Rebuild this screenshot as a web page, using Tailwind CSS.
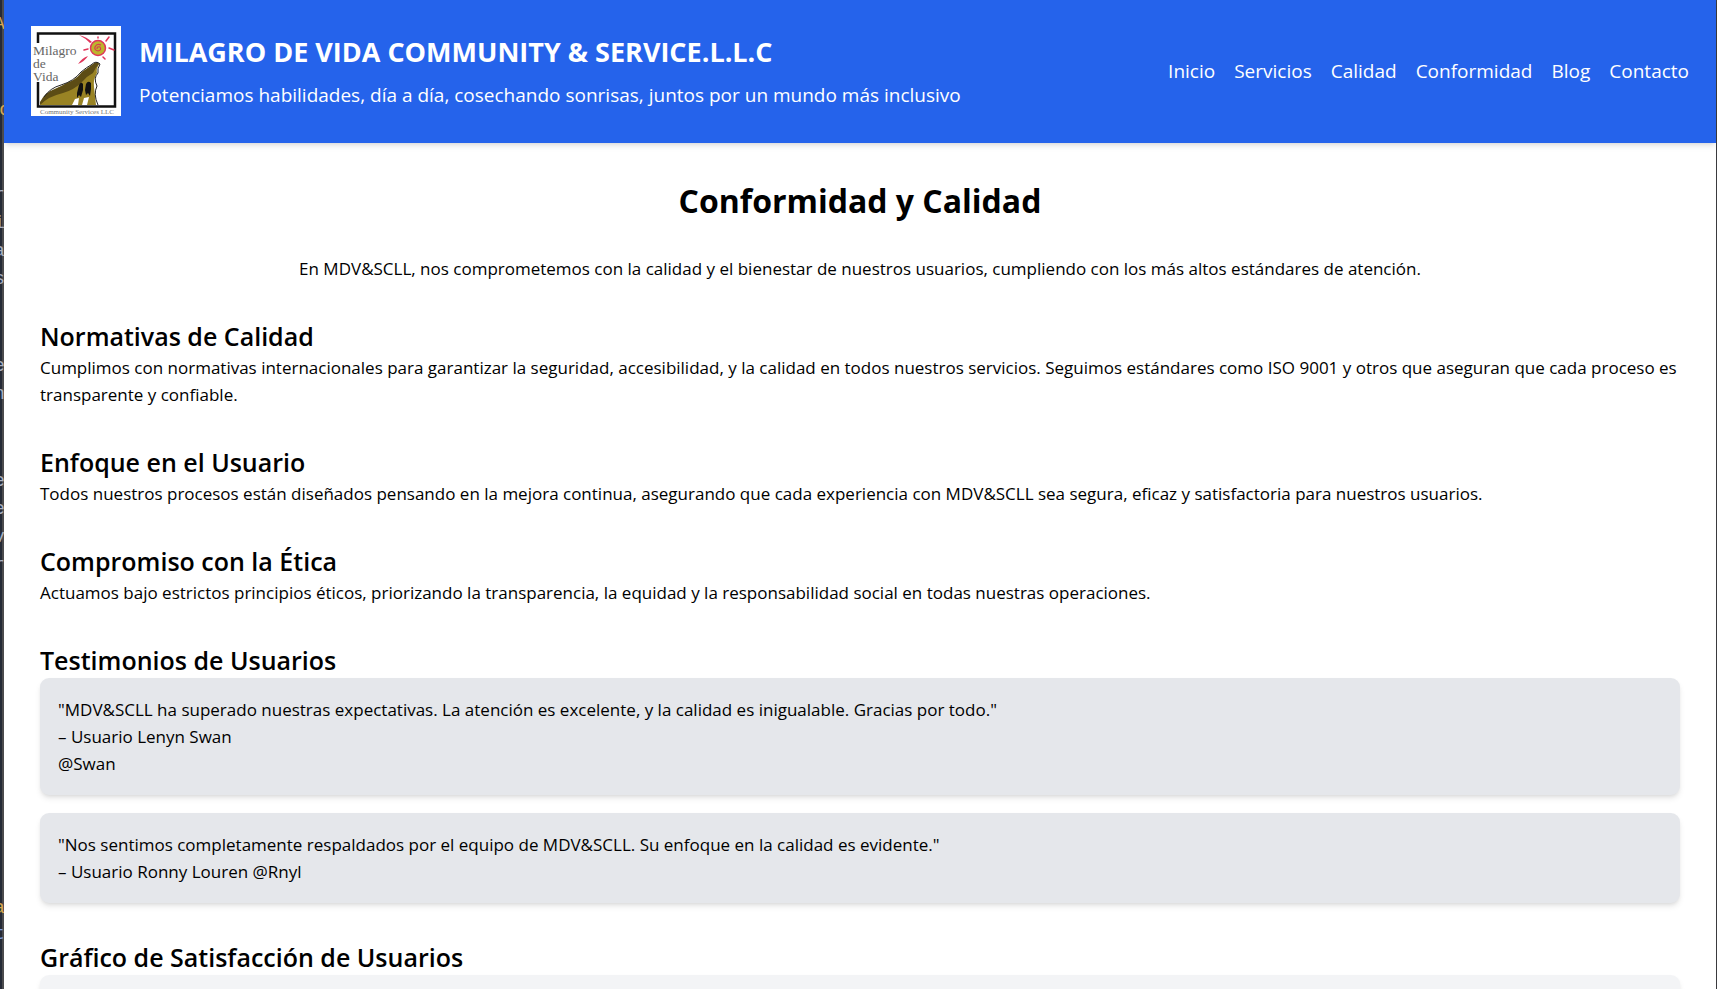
<!DOCTYPE html>
<html lang="es">
<head>
<meta charset="utf-8">
<title>Conformidad y Calidad</title>
<script src="https://cdn.jsdelivr.net/npm/@tailwindcss/browser@4"></script>
</head>
<body class="flex h-screen overflow-hidden bg-white font-['Open_Sans','Noto_Sans',sans-serif] text-[17px] leading-[27px] text-black">
  <!-- Sliver of the code editor behind the page -->
  <aside aria-hidden="true" class="relative w-1 shrink-0 overflow-hidden bg-linear-to-r from-[#252a36] from-50% to-[#4b4b4d] to-50% font-['Liberation_Mono',monospace] text-[18px] leading-[28px] text-[#a9b0c0]">
    <div class="absolute -left-[6px] top-[10px] text-[#d9a94f]">A</div>
    <div class="absolute right-[-6px] top-[96px] text-[#d9a94f]">o</div>
    <div class="absolute -left-[6px] top-[181px]">r<br>i<br>a<br>s</div>
    <div class="absolute -left-[6px] top-[352px]">e<br>n</div>
    <div class="absolute -left-[6px] top-[467px]">e<br>e<br>v<br>r</div>
    <div class="absolute -left-[6px] top-[894px] text-[#d9a94f]">a</div>
    <div class="absolute -left-[6px] top-[920px] text-[#7f9fe0]">t</div>
  </aside>
  <div class="min-w-0 flex-1 border-r border-[#3a3a3e]">
    <header class="flex items-center justify-between bg-[#2563eb] px-[27px] pt-[26px] pb-[27px] text-white shadow-md">
      <div class="flex items-center gap-[18px]">
        <svg class="size-[90px] shrink-0" viewBox="0 0 90 90" role="img" aria-label="Milagro de Vida">
          <rect width="90" height="90" fill="#fff"/>
          <path d="M7 17V7.500H84V80.500H7V56" fill="none" stroke="#111" stroke-width="2.500"/>
          <g fill="#666" font-family="Liberation Serif, serif" font-size="13.500">
            <text x="2" y="29">Milagro</text><text x="2" y="42">de</text><text x="2" y="55">Vida</text>
            <text x="9" y="88" font-size="7" fill="#777">Community Services LLC</text>
          </g>
          <path d="M48 9Q56 11 61 16L59 17Q54 12 48 9ZM47 38Q51 32 57 30Q54 35 47 38Z" fill="#e0355a"/>
          <path d="M75 15L78 11M78 22L83 24M53 24L57 23M72 31L74 33M67 11V12" stroke="#e0355a" stroke-width="1.500" stroke-linecap="round"/>
          <circle cx="67" cy="22" r="7.500" fill="#bdb52c" stroke="#e0355a" stroke-width="1.500"/>
          <path d="M66 23q0-3 3-2q2 3-2 4q-4-1-3-4q2-4 6-2" fill="none" stroke="#d8394f" stroke-width="1.200"/>
          <path d="M9 79Q13 68 24 63Q31 60 36 57Q45 54 51 46Q57 42 61 39Q66 34 68 38Q65 43 66 47Q62 53 63 61L65 79Z" fill="#998324"/>
          <path d="M9 76Q14 66 24 63Q31 60 36 57Q45 54 51 46Q57 42 61 39Q66 34 68 38Q64 42 62 47Q56 50 51 56Q43 64 32 67Q18 70 9 79Z" fill="#5c4c15"/>
          <path d="M13 71Q19 62 30 59Q43 55 50 46Q56 41 60 39Q65 34 69 38Q66 43 67 47Q62 52 66 60Q62 68 67 79" fill="none" stroke="#222" stroke-width="1"/>
          <path d="M41 79L44 73L48 72L47 79ZM51 79L53 72L58 71L56 79Z" fill="#fff"/>
          <path d="M48 59q2-4 4-1l0 6-2 7-2-2-2 3 0-5zM55 58q2-4 5-1l0 6-1 7-2-3-2 2-1-5z" fill="#111"/>
        </svg>
        <div class="pt-0.5">
          <div class="text-[27px] leading-[36px] font-bold">MILAGRO DE VIDA COMMUNITY &amp; SERVICE.L.L.C</div>
          <p class="mt-[9px] text-[19px] leading-[32px]">Potenciamos habilidades, día a día, cosechando sonrisas, juntos por un mundo más inclusivo</p>
        </div>
      </div>
      <nav class="flex gap-[19px] text-[19px] leading-[32px]">
        <a href="#">Inicio</a><a href="#">Servicios</a><a href="#">Calidad</a><a href="#">Conformidad</a><a href="#">Blog</a><a href="#">Contacto</a>
      </nav>
    </header>
    <main class="flex flex-col gap-9 px-9 pt-10 pb-9">
      <h1 class="text-center text-[32px] leading-9 font-bold">Conformidad y Calidad</h1>
      <p class="text-center">En MDV&amp;SCLL, nos comprometemos con la calidad y el bienestar de nuestros usuarios, cumpliendo con los más altos estándares de atención.</p>
      <section>
        <h2 class="text-[25px] leading-[36px] font-semibold">Normativas de Calidad</h2>
        <p>Cumplimos con normativas internacionales para garantizar la seguridad, accesibilidad, y la calidad en todos nuestros servicios. Seguimos estándares como ISO 9001 y otros que aseguran que cada proceso es transparente y confiable.</p>
      </section>
      <section>
        <h2 class="text-[25px] leading-[36px] font-semibold">Enfoque en el Usuario</h2>
        <p>Todos nuestros procesos están diseñados pensando en la mejora continua, asegurando que cada experiencia con MDV&amp;SCLL sea segura, eficaz y satisfactoria para nuestros usuarios.</p>
      </section>
      <section>
        <h2 class="text-[25px] leading-[36px] font-semibold">Compromiso con la Ética</h2>
        <p>Actuamos bajo estrictos principios éticos, priorizando la transparencia, la equidad y la responsabilidad social en todas nuestras operaciones.</p>
      </section>
      <section>
        <h2 class="text-[25px] leading-[36px] font-semibold">Testimonios de Usuarios</h2>
        <div class="flex flex-col gap-[18px]">
          <blockquote class="rounded-[9px] bg-gray-200 p-[18px] shadow-md">
            <p>"MDV&amp;SCLL ha superado nuestras expectativas. La atención es excelente, y la calidad es inigualable. Gracias por todo."</p>
            <p>– Usuario Lenyn Swan</p>
            <p>@Swan</p>
          </blockquote>
          <blockquote class="rounded-[9px] bg-gray-200 p-[18px] shadow-md">
            <p>"Nos sentimos completamente respaldados por el equipo de MDV&amp;SCLL. Su enfoque en la calidad es evidente."</p>
            <p>– Usuario Ronny Louren @Rnyl</p>
          </blockquote>
        </div>
      </section>
      <section>
        <h2 class="text-[25px] leading-[36px] font-semibold">Gráfico de Satisfacción de Usuarios</h2>
        <div class="h-72 rounded-[9px] bg-gray-100 shadow-md"></div>
      </section>
    </main>
  </div>
</body>
</html>
